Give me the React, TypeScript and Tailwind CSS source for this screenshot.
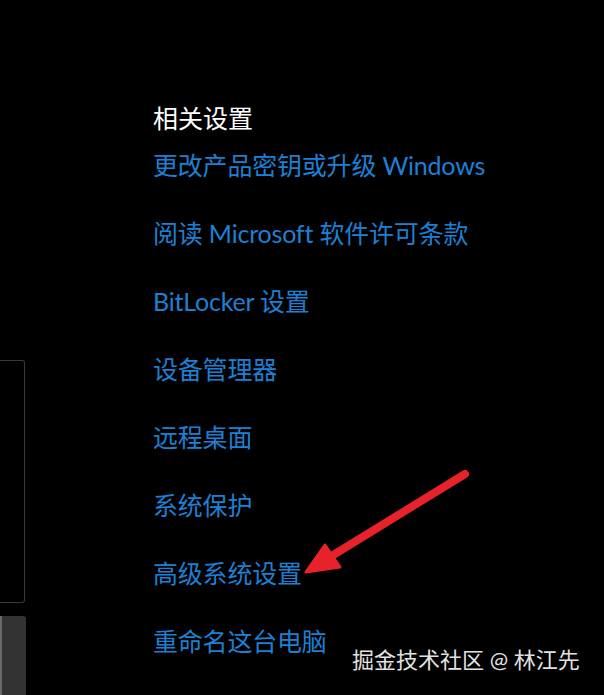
const links = [
  "更改产品密钥或升级 Windows",
  "阅读 Microsoft 软件许可条款",
  "BitLocker 设置",
  "设备管理器",
  "远程桌面",
  "系统保护",
  "高级系统设置",
  "重命名这台电脑",
];

const App = () => {
  return (
    <div className="relative flex w-[604px] h-[695px] overflow-hidden bg-black font-['Lato','Noto_Sans_CJK_SC',sans-serif]">
      {/* left edge: pieces of the neighbouring panel */}
      <div className="flex flex-col w-[26px] shrink-0 pt-[360px]">
        <div className="h-[244px] w-[25px] rounded-r-[3px] border border-l-0 border-[#3a3a3a]" />
        <div className="mt-[13px] h-[80px] w-[26px] rounded-tr-[3px] bg-[#333333] border-l-2 border-[#6a6a6a]" />
      </div>

      <div className="flex flex-col pl-[127px] pt-[102px]">
        <h2 className="text-[25px] leading-[32px] text-white">相关设置</h2>
        <ul className="mt-[15px] flex flex-col gap-[36px]">
          {links.map((l) => (
            <li key={l} className="text-[25px] leading-[32px] tracking-[-0.2px] text-[#1c80d4] whitespace-nowrap">
              {l}
            </li>
          ))}
        </ul>
      </div>

      <svg
        className="absolute left-0 top-0 pointer-events-none"
        width="604"
        height="695"
        viewBox="0 0 604 695"
      >
        <line x1="465" y1="474" x2="330" y2="557" stroke="#e8222b" strokeWidth="8" strokeLinecap="round" />
        <polygon points="306,572 325,545 340,567" fill="#e8222b" stroke="#e8222b" strokeWidth="3" strokeLinejoin="round" />
      </svg>

      <div className="absolute left-[352px] top-[646px] text-[22px] leading-[28px] text-[#e2e2e2] whitespace-nowrap">
        掘金技术社区 @ 林江先
      </div>
    </div>
  );
};

export default App;
